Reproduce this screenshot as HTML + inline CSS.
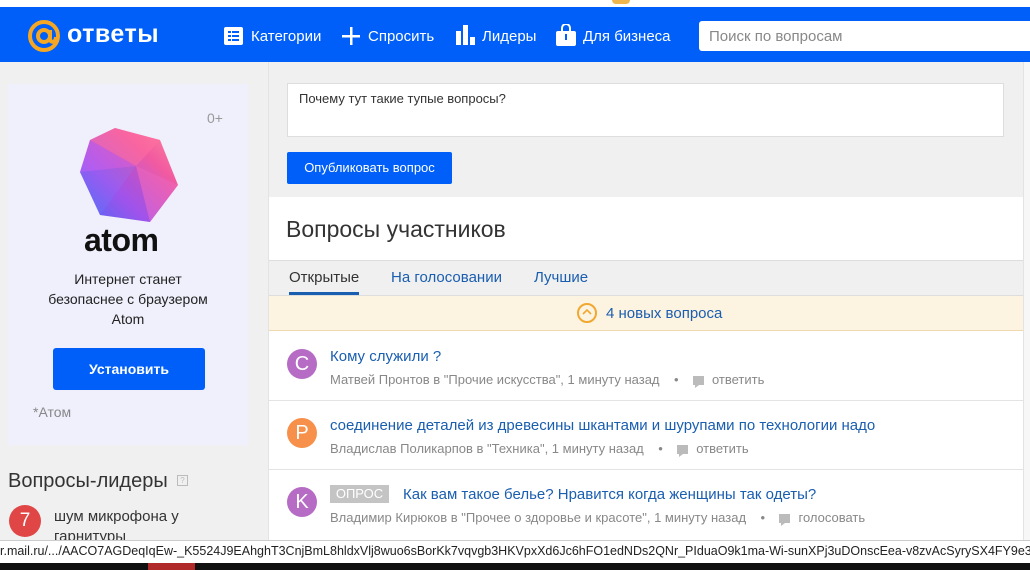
<!DOCTYPE html>
<html><head><meta charset="utf-8"><style>
*{margin:0;padding:0;box-sizing:border-box}
body{width:1030px;height:570px;overflow:hidden;position:relative;background:#f0f0f0;font-family:"Liberation Sans",Arial,sans-serif;color:#333}
.a{position:absolute}
.hdr{left:0;top:7px;width:1030px;height:55px;background:#005ff9}
.nav{color:#fff;font-size:15px;top:28px}
.q{color:#1a5eb0;font-size:15px}
.meta{color:#888;font-size:13px}
.av{width:30px;height:30px;border-radius:50%;color:#fff;font-size:20px;text-align:center;line-height:30px}
.sep{height:1px;background:#e3e3e3;left:268px;width:755px}
.ic{display:inline-block;width:11px;height:9px;background:#bbb;vertical-align:-1px;margin-right:8px;position:relative}
.ic:after{content:"";position:absolute;left:2px;top:9px;border-left:4px solid #bbb;border-bottom:3px solid transparent}
</style></head><body>
<div class="a" style="left:0;top:0;width:1030px;height:7px;background:#fff"></div>
<div class="a" style="left:612px;top:0;width:18px;height:4px;background:#f0b54c;border-radius:0 0 9px 9px"></div>
<div class="a hdr"></div>
<svg class="a" style="left:27px;top:19px" width="34" height="34" viewBox="0 0 34 34"><circle cx="17" cy="17" r="14" fill="none" stroke="#f5a623" stroke-width="4"/><circle cx="17" cy="17" r="6" fill="none" stroke="#f5a623" stroke-width="4"/><path d="M23 11v9c0 4 6 4 6-2" fill="none" stroke="#f5a623" stroke-width="4"/></svg>
<div class="a" style="left:67px;top:20px;color:#fff;font-size:25px;font-weight:bold;letter-spacing:0.5px">ответы</div>
<svg class="a" style="left:224px;top:27px" width="19" height="18"><rect width="19" height="18" rx="2" fill="#fff"/><rect x="4" y="4" width="3" height="2" fill="#005ff9"/><rect x="8" y="4" width="7" height="2" fill="#005ff9"/><rect x="4" y="8" width="3" height="2" fill="#005ff9"/><rect x="8" y="8" width="7" height="2" fill="#005ff9"/><rect x="4" y="12" width="3" height="2" fill="#005ff9"/><rect x="8" y="12" width="7" height="2" fill="#005ff9"/></svg>
<div class="a nav" style="left:251px">Категории</div>
<svg class="a" style="left:342px;top:27px" width="18" height="18"><rect x="8" width="2.5" height="18" fill="#fff"/><rect y="8" width="18" height="2.5" fill="#fff"/></svg>
<div class="a nav" style="left:368px">Спросить</div>
<svg class="a" style="left:456px;top:25px" width="20" height="20"><rect x="0" y="6" width="5" height="14" fill="#fff"/><rect x="7" y="0" width="5" height="20" fill="#fff"/><rect x="14" y="12" width="5" height="8" fill="#fff"/></svg>
<div class="a nav" style="left:482px">Лидеры</div>
<svg class="a" style="left:556px;top:24px" width="20" height="22"><path d="M6 7V4a4 4 0 0 1 8 0v3" fill="none" stroke="#fff" stroke-width="2"/><rect x="0" y="7" width="20" height="15" rx="2" fill="#fff"/><rect x="9" y="10" width="2" height="6" fill="#005ff9"/></svg>
<div class="a nav" style="left:583px">Для бизнеса</div>
<div class="a" style="left:699px;top:21px;width:331px;height:30px;background:#fff;border-radius:3px 0 0 3px"></div>
<div class="a" style="left:709px;top:28px;color:#888;font-size:15px">Поиск по вопросам</div>

<div class="a" style="left:8px;top:84px;width:240px;height:361px;background:#eff0fc"></div>
<div class="a" style="left:207px;top:110px;color:#999;font-size:14px">0+</div>
<svg class="a" style="left:78px;top:128px" width="102" height="96" viewBox="0 0 102 96"><defs><linearGradient id="g" x1="0" y1="1" x2="1" y2="0"><stop offset="0" stop-color="#2f7bff"/><stop offset=".35" stop-color="#a95cf0"/><stop offset=".7" stop-color="#f25aa0"/><stop offset="1" stop-color="#ff8a9a"/></linearGradient></defs><polygon points="37,0 82,12 100,57 72,94 22,87 2,44 12,12" fill="url(#g)"/><polygon points="37,0 82,12 58,38 12,12" fill="#ff6fa0" opacity=".5"/><polygon points="12,12 58,38 2,44" fill="#c060f0" opacity=".4"/><polygon points="2,44 58,38 22,87" fill="#7a5cf0" opacity=".35"/><polygon points="58,38 100,57 72,94" fill="#f06ac0" opacity=".4"/><polygon points="58,38 72,94 22,87" fill="#8a40e0" opacity=".3"/></svg>
<div class="a" style="left:84px;top:222px;font-size:32px;font-weight:bold;color:#111;letter-spacing:-0.5px">atom</div>
<div class="a" style="left:8px;top:269px;width:240px;text-align:center;font-size:14px;line-height:20px;color:#222">Интернет станет<br>безопаснее с браузером<br>Atom</div>
<div class="a" style="left:53px;top:348px;width:152px;height:42px;background:#005ff9;border-radius:3px;color:#fff;font-weight:bold;font-size:14px;text-align:center;line-height:42px">Установить</div>
<div class="a" style="left:33px;top:404px;color:#888;font-size:14px">*Атом</div>
<div class="a" style="left:8px;top:470px;font-size:20px;color:#333">Вопросы-лидеры</div>
<div class="a" style="left:177px;top:475px;width:11px;height:11px;border:1px solid #bbb;font-size:8px;color:#bbb;text-align:center;line-height:9px">?</div>
<div class="a" style="left:9px;top:505px;width:32px;height:32px;border-radius:50%;background:#e04646;color:#fff;font-size:19px;text-align:center;line-height:32px">7</div>
<div class="a" style="left:54px;top:507px;font-size:15px;line-height:20px;color:#333">шум микрофона у<br>гарнитуры</div>

<div class="a" style="left:268px;top:62px;width:1px;height:478px;background:#e3e3e3"></div>
<div class="a" style="left:1023px;top:62px;width:7px;height:478px;background:#f7f7f7;border-left:1px solid #e3e3e3"></div>
<div class="a" style="left:287px;top:83px;width:717px;height:54px;background:#fff;border:1px solid #ddd"></div>
<div class="a" style="left:299px;top:91px;font-size:13px;color:#333">Почему тут такие тупые вопросы?</div>
<div class="a" style="left:287px;top:152px;width:165px;height:32px;background:#005ff9;border-radius:2px;color:#fff;font-size:13px;text-align:center;line-height:32px">Опубликовать вопрос</div>
<div class="a" style="left:269px;top:197px;width:754px;height:343px;background:#fff"></div>
<div class="a" style="left:286px;top:216px;font-size:23px;color:#333">Вопросы участников</div>
<div class="a" style="left:269px;top:260px;width:754px;height:36px;background:#f0f0f0;border-top:1px solid #ddd;border-bottom:1px solid #ddd"></div>
<div class="a" style="left:289px;top:269px;font-size:15px;color:#333">Открытые</div>
<div class="a" style="left:289px;top:292px;width:70px;height:3px;background:#1a5eb0"></div>
<div class="a" style="left:391px;top:269px;font-size:15px;color:#1a5eb0">На голосовании</div>
<div class="a" style="left:534px;top:269px;font-size:15px;color:#1a5eb0">Лучшие</div>
<div class="a" style="left:269px;top:296px;width:754px;height:35px;background:#fdf3e1;border-bottom:1px solid #f0d9b0"></div>
<div class="a" style="left:577px;top:303px;width:20px;height:20px;border:2px solid #f0a830;border-radius:50%"></div>
<svg class="a" style="left:582px;top:309px" width="10" height="6"><path d="M1 5l4-4 4 4" fill="none" stroke="#f0a830" stroke-width="1.6"/></svg>
<div class="a" style="left:606px;top:305px;font-size:15px;color:#1a5eb0">4 новых вопроса</div>

<div class="a av" style="left:287px;top:349px;background:#b66bc5">C</div>
<div class="a q" style="left:330px;top:348px">Кому служили ?</div>
<div class="a meta" style="left:330px;top:372px">Матвей Пронтов в "Прочие искусства", 1 минуту назад &nbsp;&nbsp;&nbsp;•&nbsp;&nbsp;&nbsp; <span class="ic"></span>ответить</div>
<div class="a sep" style="top:400px"></div>
<div class="a av" style="left:287px;top:418px;background:#f7904a">P</div>
<div class="a q" style="left:330px;top:417px">соединение деталей из древесины шкантами и шурупами по технологии надо</div>
<div class="a meta" style="left:330px;top:441px">Владислав Поликарпов в "Техника", 1 минуту назад &nbsp;&nbsp;&nbsp;•&nbsp;&nbsp;&nbsp; <span class="ic"></span>ответить</div>
<div class="a sep" style="top:469px"></div>
<div class="a av" style="left:287px;top:487px;background:#b66bc5">K</div>
<div class="a" style="left:330px;top:485px;width:59px;height:18px;background:#c4c4c4;color:#fff;font-size:13px;text-align:center;line-height:18px">ОПРОС</div>
<div class="a q" style="left:403px;top:486px">Как вам такое белье? Нравится когда женщины так одеты?</div>
<div class="a meta" style="left:330px;top:510px">Владимир Кирюков в "Прочее о здоровье и красоте", 1 минуту назад &nbsp;&nbsp;&nbsp;•&nbsp;&nbsp;&nbsp; <span class="ic"></span>голосовать</div>

<div class="a" style="left:0;top:540px;width:1030px;height:23px;background:#fff;border-top:1px solid #ccc"></div>
<div class="a" style="left:0;top:544px;font-size:12.5px;color:#222;white-space:nowrap">r.mail.ru/.../AACO7AGDeqIqEw-_K5524J9EAhghT3CnjBmL8hldxVlj8wuo6sBorKk7vqvgb3HKVpxXd6Jc6hFO1edNDs2QNr_PIduaO9k1ma-Wi-sunXPj3uDOnscEea-v8zvAcSyrySX4FY9e3k</div>
<div class="a" style="left:0;top:563px;width:1030px;height:7px;background:#111"></div>
<div class="a" style="left:148px;top:563px;width:47px;height:7px;background:#b02a2a"></div>
</body></html>
